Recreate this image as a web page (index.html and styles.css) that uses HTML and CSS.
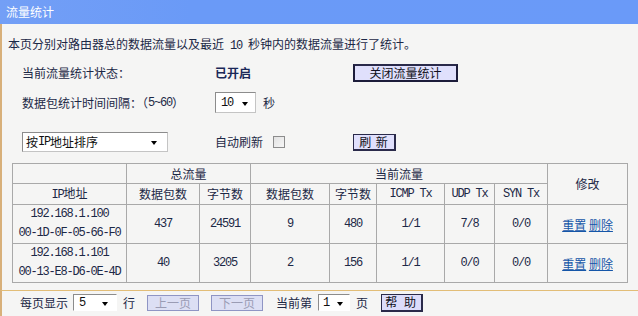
FILE: index.html
```html
<!DOCTYPE html>
<html lang="zh-CN">
<head>
<meta charset="utf-8">
<title>流量统计</title>
<link rel="stylesheet" href="styles.css">
</head>
<body>
<div class="title">流量统计</div>
<div class="panel">
  <p class="desc">本页分别对路由器总的数据流量以及最近<span class="m"> 10 </span>秒钟内的数据流量进行了统计。</p>
  <div class="row row1">
    <span class="c1">当前流量统计状态：</span>
    <span class="c2 on">已开启</span>
    <button class="btn btn-close">关闭流量统计</button>
  </div>
  <div class="row row2">
    <span class="c1">数据包统计时间间隔：（<span class="m">5~60</span>）</span>
    <span class="c2"><span class="sel sel-int"><span class="m">10</span><i class="arr"></i></span><span class="unit">秒</span></span>
  </div>
  <div class="row row3">
    <span class="c1"><span class="sel sel-sort">按<span class="m">IP</span>地址排序<i class="arr"></i></span></span>
    <span class="c2">自动刷新<span class="chk"></span></span>
    <button class="btn btn-refresh">刷 新</button>
  </div>
  <table class="stats">
    <colgroup>
      <col style="width:114px"><col style="width:73px"><col style="width:51px"><col style="width:79px"><col style="width:47px"><col style="width:68px"><col style="width:50px"><col style="width:53px"><col style="width:80px">
    </colgroup>
    <tr class="h">
      <td></td>
      <td colspan="2">总流量</td>
      <td colspan="5">当前流量</td>
      <td rowspan="2">修改</td>
    </tr>
    <tr class="h">
      <td><span class="m">IP</span>地址</td>
      <td>数据包数</td>
      <td>字节数</td>
      <td>数据包数</td>
      <td>字节数</td>
      <td class="m">ICMP Tx</td>
      <td class="m">UDP Tx</td>
      <td class="m">SYN Tx</td>
    </tr>
    <tr class="d">
      <td class="m">192.168.1.100<br>00-1D-0F-05-66-F0</td>
      <td class="m">437</td>
      <td class="m">24591</td>
      <td class="m">9</td>
      <td class="m">480</td>
      <td class="m">1/1</td>
      <td class="m">7/8</td>
      <td class="m">0/0</td>
      <td><a href="#">重置</a> <a href="#">删除</a></td>
    </tr>
    <tr class="d">
      <td class="m">192.168.1.101<br>00-13-E8-D6-0E-4D</td>
      <td class="m">40</td>
      <td class="m">3205</td>
      <td class="m">2</td>
      <td class="m">156</td>
      <td class="m">1/1</td>
      <td class="m">0/0</td>
      <td class="m">0/0</td>
      <td><a href="#">重置</a> <a href="#">删除</a></td>
    </tr>
  </table>
</div>
<div class="footer">
  <span>每页显示</span>
  <span class="sel sel-rows"><span class="m">5</span><i class="arr"></i></span>
  <span class="g6">行</span>
  <button class="btn btn-dis">上一页</button>
  <button class="btn btn-dis g13">下一页</button>
  <span class="g13">当前第</span>
  <span class="sel sel-page"><span class="m">1</span><i class="arr"></i></span>
  <span class="g6">页</span>
  <button class="btn btn-help">帮 助</button>
</div>
</body>
</html>
```
FILE: styles.css
```css
body {
  margin: 0;
  width: 638px;
  height: 316px;
  overflow: hidden;
  background: #f5f5f4;
  font-family: "Noto Sans CJK SC", sans-serif;
  font-size: 12px;
  line-height: 16px;
  color: #1c2846;
}

.m {
  font-family: "Liberation Mono", monospace;
  font-size: 12px;
  letter-spacing: -1.2px;
}

.title {
  height: 24px;
  line-height: 24px;
  padding-left: 6px;
  background: linear-gradient(90deg, #739ff6 0%, #6a9af7 30%, #6a9af8 100%);
  color: #ffffff;
}

.panel {
  box-sizing: border-box;
  height: 267px;
  padding-top: 12px;
  border-left: 2px solid #d8b07a;
  border-bottom: 1px solid #e2bd77;
}

.desc {
  margin: 0;
  padding-left: 6px;
  height: 16px;
}

.row {
  display: flex;
  align-items: center;
  padding-left: 20px;
}

.row1 { margin-top: 12px; height: 18px; }
.row2 { margin-top: 10px; height: 21px; }
.row3 { margin-top: 19px; height: 20px; }

.c1 { width: 193px; flex: none; display: flex; align-items: center; }
.c2 { width: 138px; flex: none; display: flex; align-items: center; }

.on {
  font-weight: bold;
  color: #1a2858;
}

.sel {
  box-sizing: border-box;
  display: inline-flex;
  align-items: center;
  position: relative;
  background: #ffffff;
  border: 1px solid #c4c4c4;
  border-top-color: #8c8c8c;
  border-left-color: #8c8c8c;
  color: #101010;
}

.arr {
  position: absolute;
  top: 50%;
  margin-top: -1px;
  width: 0;
  height: 0;
  border-top: 4px solid #000;
  border-left: 3.5px solid transparent;
  border-right: 3.5px solid transparent;
}

.sel-int { width: 41px; height: 21px; padding-left: 5px; }
.sel-int .arr { right: 7px; }

.unit { margin-left: 7px; }

.sel-sort { width: 146px; height: 20px; padding-left: 3px; }
.sel-sort .arr { right: 10px; }

.chk {
  box-sizing: border-box;
  width: 12px;
  height: 12px;
  margin-left: 10px;
  border: 1px solid #8c8c8c;
  background: linear-gradient(135deg, #e2e2e2, #f6f6f6);
}

.btn {
  box-sizing: border-box;
  padding: 0;
  margin: 0;
  font-family: "Noto Sans CJK SC", sans-serif;
  font-size: 12px;
  line-height: 14px;
  color: #101020;
  background: #e0e0fc;
}

.btn-close {
  width: 105px;
  height: 18px;
  border: 2px solid #1c1c3a;
  border-top-color: #2a2a4a;
}

.btn-refresh {
  width: 43px;
  height: 17px;
  border: 1px solid #2a2a4a;
  border-right-width: 2px;
  border-bottom-width: 2px;
  letter-spacing: 1px;
}

.stats {
  margin: 11px 0 0 10px;
  border-collapse: collapse;
  table-layout: fixed;
  width: 616px;
}

.stats td {
  border: 1px solid #a9a9a9;
  padding: 0;
  text-align: center;
  vertical-align: middle;
}

.stats tr.h { height: 20px; }
.stats tr.h td { line-height: 18px; }
.stats tr.d { height: 37px; }
.stats tr.d td { line-height: 19px; }

.stats a {
  color: #1556a8;
  text-decoration: underline;
}

.footer {
  box-sizing: border-box;
  height: 25px;
  padding: 0 0 2px 18px;
  display: flex;
  align-items: center;
  border-left: 2px solid #d8b07a;
}

.sel-rows { width: 44px; height: 17px; margin-left: 5px; padding-left: 5px; border-right-color: transparent; border-bottom-color: transparent; }
.sel-rows .arr { right: 8px; }
.sel-page { width: 32px; height: 17px; margin-left: 6px; padding-left: 4px; border-right-color: transparent; border-bottom-color: transparent; }
.sel-page .arr { right: 6px; }

.g6 { margin-left: 6px; }
.g13 { margin-left: 13px; }

.btn-dis {
  width: 52px;
  height: 16px;
  margin-left: 12px;
  border: 1px solid #8f95c4;
  background: #dcdff4;
  color: #9a9cb4;
}

.btn-help {
  width: 42px;
  height: 18px;
  margin-left: 13px;
  border: 1px solid #2a2a4a;
  border-right-width: 2px;
  border-bottom-width: 2px;
  background: #dcdcfa;
  letter-spacing: 2px;
}
```
